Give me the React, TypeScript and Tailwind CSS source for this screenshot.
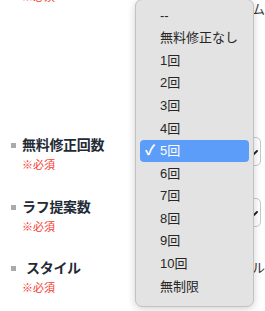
const options = ['--', '無料修正なし', '1回', '2回', '3回', '4回', '5回', '6回', '7回', '8回', '9回', '10回', '無制限'];
const selected = '5回';

function Required({ className = '' }: { className?: string }) {
  return <div className={`text-[11px] leading-[14px] text-[#f5392f] ${className}`}>※必須</div>;
}

function Label({ text, indent = false }: { text: string; indent?: boolean }) {
  return (
    <div className="flex items-center h-[20px]">
      <span className="w-[5px] h-[5px] bg-[#a7abaf] mr-[6px]" />
      <span className={`text-[14px] font-bold text-[#1f2b36] tracking-[-0.3px] ${indent ? 'ml-[4px]' : ''}`}>{text}</span>
    </div>
  );
}

function SelectBox() {
  return (
    <div className="h-[29px] w-[44px] border border-[#c9c9c9] rounded-[5px] bg-white flex items-center justify-end pr-[2px]">
      <svg width="10" height="6" viewBox="0 0 10 6" className="mt-[2px]">
        <path d="M1 1 L5 5 L9 1" fill="none" stroke="#1e1e1e" strokeWidth="1.8" strokeLinecap="round" />
      </svg>
    </div>
  );
}

export default function App() {
  return (
    <div
      className="relative w-[265px] h-[311px] overflow-hidden bg-white"
      style={{ fontFamily: '"Liberation Sans", "Noto Sans CJK JP", sans-serif' }}
    >
      <div className="flex flex-col">
        <div className="flex">
          <div className="w-[217px] pl-[22px]">
            <Required className="mt-[-10px]" />
          </div>
          <div className="flex-1 mt-[3px] text-[13px] leading-[14px] text-[#333] whitespace-nowrap">フォーム</div>
        </div>

        <div className="flex mt-[118px]">
          <div className="w-[217px] pl-[11px]">
            <Label text="無料修正回数" />
            <Required className="mt-[3px] ml-[11px]" />
          </div>
          <div className="mt-[2px]">
            <SelectBox />
          </div>
        </div>

        <div className="flex mt-[25px]">
          <div className="w-[217px] pl-[11px]">
            <Label text="ラフ提案数" />
            <Required className="mt-[3px] ml-[11px]" />
          </div>
          <div className="mt-[1px]">
            <SelectBox />
          </div>
        </div>

        <div className="flex mt-[24px]">
          <div className="w-[217px] pl-[11px]">
            <Label text="スタイル" indent />
            <Required className="mt-[3px] ml-[11px]" />
          </div>
          <div className="flex-1 text-[13px] leading-[20px] text-[#333] whitespace-nowrap">
            <div>スタイル</div>
            <div className="mt-[8px] ml-[-13px]">・ロゴ</div>
          </div>
        </div>
      </div>

      <div className="absolute left-[135px] top-[-1px] w-[119px] h-[308px] bg-[#e3e3e3] border border-[#c2c2c2] rounded-[7px] shadow-[0_2px_8px_rgba(0,0,0,0.18)] pt-[4px]">
        {options.map((o) => {
          const active = o === selected;
          return (
            <div
              key={o}
              className={`h-[22.6px] mx-[4px] rounded-[4px] flex items-center text-[13px] whitespace-nowrap ${
                active ? 'bg-[#5d9dfa] text-white' : 'text-[#262626]'
              }`}
            >
              <span className="w-[20px] pl-[5px] text-[14px] font-bold">{active ? '✓' : ''}</span>
              <span>{o}</span>
            </div>
          );
        })}
      </div>
    </div>
  );
}
